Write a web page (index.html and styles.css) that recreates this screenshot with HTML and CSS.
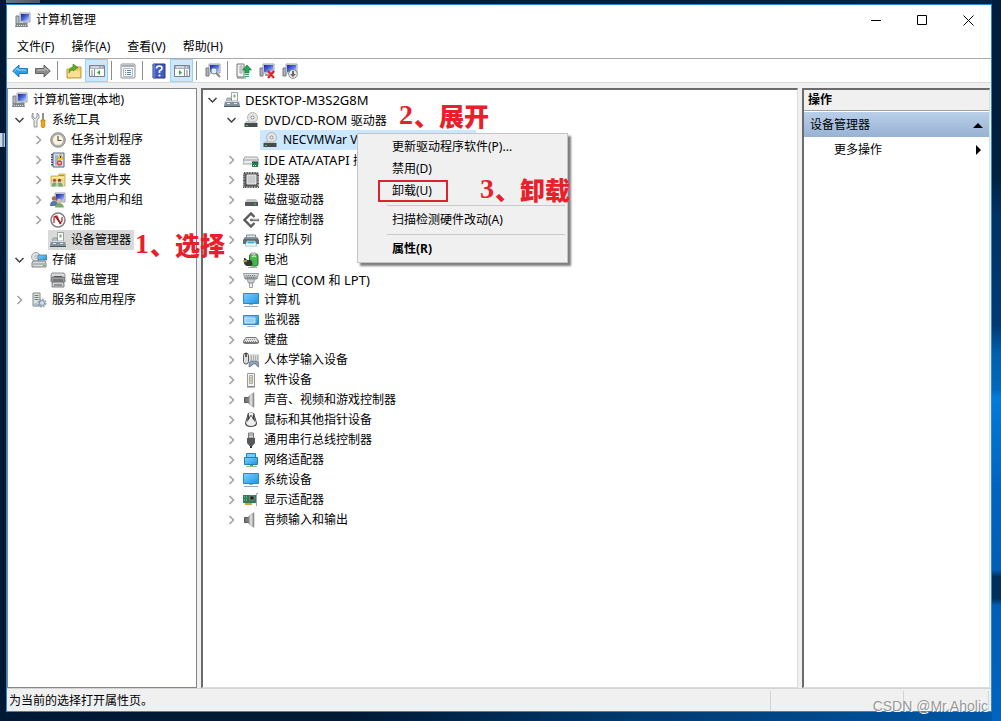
FILE: index.html
```html
<!DOCTYPE html>
<html lang="zh-CN">
<head>
<meta charset="utf-8">
<title>计算机管理</title>
<link rel="stylesheet" href="styles.css">
</head>
<body>
<svg class="defs" aria-hidden="true">
  <defs>
    <linearGradient id="blue" x1="0" y1="0" x2="1" y2="1"><stop offset="0" stop-color="#7fd0ff"/><stop offset="1" stop-color="#1e94e4"/></linearGradient>
    <linearGradient id="navy" x1="0" y1="0" x2="1" y2="1"><stop offset="0" stop-color="#1822a0"/><stop offset=".5" stop-color="#4d68dc"/><stop offset="1" stop-color="#c5dcff"/></linearGradient>
    <linearGradient id="steel" x1="0" y1="0" x2="0" y2="1"><stop offset="0" stop-color="#eceeef"/><stop offset="1" stop-color="#888e92"/></linearGradient>
    <linearGradient id="metal" x1="0" y1="0" x2="1" y2="0"><stop offset="0" stop-color="#666"/><stop offset=".5" stop-color="#eee"/><stop offset="1" stop-color="#777"/></linearGradient>
  </defs>
  <symbol id="i-computer" viewBox="0 0 16 16"><path d="M1 4h3v8H1z" fill="#b9bfc4" stroke="#777f86"/><path d="M5 1h10v9H5z" fill="#dfe2e5" stroke="#9aa2aa"/><path d="M6 2h8v7H6z" fill="url(#navy)"/><path d="M8 10h4l1 2H8z" fill="#aaa"/><path d="M1 11h11l1 4H0z" fill="#7d878c"/><path d="M2 13.500h9" stroke="#e2e6e8" stroke-dasharray="1 1"/></symbol>
  <symbol id="i-tools" viewBox="0 0 16 16"><path d="M2 1v4l2 1.500L6 5V1l2 2v3L6 8v7H3V8L1 6V3z" fill="#e5e8ea" stroke="#7d8388" stroke-width=".8"/><path d="M12 1v7" stroke="#777" stroke-width="1.600"/><path d="M10 8h4v2l-.6 1 .6 3-1 1.500h-2L10 14l.6-3-.6-1z" fill="#f2a516" stroke="#b87305" stroke-width=".7"/></symbol>
  <symbol id="i-clock" viewBox="0 0 16 16"><circle cx="8" cy="8" r="7.300" fill="#b4b4b4" stroke="#777" stroke-width=".8"/><circle cx="8" cy="8" r="5.500" fill="#fbf3dc" stroke="#999" stroke-width=".6"/><path d="M8 4v4.500h3.500" fill="none" stroke="#555" stroke-width="1.200"/></symbol>
  <symbol id="i-event" viewBox="0 0 16 16"><path d="M3 1h11v14H3z" fill="#d7e2ef" stroke="#50658a"/><path d="M2 2v12" stroke="#3f5277" stroke-width="2" stroke-dasharray="1.500 1"/><path d="M5 4h3M5 6h3M5 8h3M5 10h2M5 12h2" stroke="#5474b0" stroke-width=".8"/><path d="M10.500 2l3 5h-6z" fill="#ffd430" stroke="#c49100" stroke-width=".6"/><path d="M10.500 4v2" stroke="#222"/><circle cx="9.500" cy="11" r="2.700" fill="#d9453b"/><path d="M8.500 10l2 2m0-2l-2 2" stroke="#fff" stroke-width=".8"/></symbol>
  <symbol id="i-share" viewBox="0 0 16 16"><path d="M1 4h7l1-2h6v12H1z" fill="#f3d982" stroke="#c6a24a" stroke-width=".8"/><path d="M9 3h5v1H9z" fill="#5aa0da"/><path d="M2 5h12v1H2z" fill="#fff2ba"/><circle cx="4.500" cy="8.500" r="1.700" fill="#a8552f"/><circle cx="9.500" cy="8.500" r="1.700" fill="#7a4928"/><path d="M1 15q0-5 3.500-5T8 15zM6 15q0-5 3.500-5t4 5z" fill="#78ab68" stroke="#fff" stroke-width=".6"/></symbol>
  <symbol id="i-users" viewBox="0 0 16 16"><path d="M5 1h10v9H5z" fill="#dde2e6" stroke="#959da6"/><path d="M6 2h8v7H6z" fill="url(#navy)"/><circle cx="4" cy="6.500" r="2.300" fill="#a87045"/><circle cx="9" cy="9" r="2.300" fill="#e2bd88"/><path d="M0 14q0-5 4-5t4 5z" fill="#5576ac"/><path d="M5 15.500q0-4.500 4-4.500t5 4.500z" fill="#79a86f"/></symbol>
  <symbol id="i-perf" viewBox="0 0 16 16"><circle cx="8" cy="8" r="7" fill="#fff" stroke="#808080" stroke-width="1.500"/><path d="M4 11V5l3-1 3 7 2-2V5" fill="none" stroke="#c9252a" stroke-width="1.300"/><path d="M5 4l6 8" stroke="#8d181b" stroke-width="1.300"/></symbol>
  <symbol id="i-device" viewBox="0 0 16 16"><path d="M7.500 .5h6V9h-6z" fill="#fff" stroke="#858d92" stroke-width=".8"/><path d="M9.500 2.500h2v3h-2z" fill="#79b567"/><path d="M3 6h4l1 4H2z" fill="#b8bec2" stroke="#7d8589" stroke-width=".6"/><path d="M1 9h14l1 5H0z" fill="#83929d"/><path d="M1 9.500h14" stroke="#d5dde2"/><path d="M3 11.500h3m4 0h3" stroke="#dfe9f0"/><path d="M0 14.500h16" stroke="#4e5961"/></symbol>
  <symbol id="i-storage" viewBox="0 0 16 16"><circle cx="5" cy="5" r="4.500" fill="#dce5df" stroke="#8b9692" stroke-width=".8"/><circle cx="5" cy="5" r="1.300" fill="#fff" stroke="#888" stroke-width=".6"/><path d="M7 3h9v5H7z" fill="url(#blue)" stroke="#68747c" stroke-width=".8"/><path d="M2 9h12l1 2v4H1v-4z" fill="#d7dbdd" stroke="#62696d" stroke-width=".8"/><path d="M2 12h12" stroke="#8a9392"/><path d="M12 13.500h2" stroke="#39c84a"/></symbol>
  <symbol id="i-disks" viewBox="0 0 16 16"><path d="M2 1h12l1 2v3H1V3z" fill="#d9dcde" stroke="#777" stroke-width=".8"/><path d="M2 5h12l1 2v3H1V7z" fill="#9a9fa2" stroke="#666" stroke-width=".8"/><path d="M3 10h10l1 2v3H2v-3z" fill="#cdd0d2" stroke="#666" stroke-width=".8"/><path d="M4 4.500h8M3 8h10M4 13h8" stroke="#555"/></symbol>
  <symbol id="i-services" viewBox="0 0 16 16"><path d="M2 1h7v13H2z" fill="#dce0e2" stroke="#81888c"/><path d="M3.500 3.500h4m-4 2h4m-4 2h4" stroke="#5f8a70"/><circle cx="11" cy="11" r="3.500" fill="none" stroke="#8ba5bd" stroke-width="2" stroke-dasharray="1.800 .9"/><circle cx="11" cy="11" r="2.500" fill="#d4e0ea" stroke="#7a94aa"/><circle cx="5" cy="13" r="2" fill="#acb8c0"/></symbol>
  <symbol id="i-optical" viewBox="0 0 16 16"><circle cx="9.500" cy="5.500" r="5" fill="#e2e4e5" stroke="#a4a7a9" stroke-width=".8"/><circle cx="9.500" cy="5.500" r="1.500" fill="#fff" stroke="#888"/><path d="M3 9h10l1.500 2.500h-13z" fill="#c5c8ca"/><path d="M1.500 11h13v4h-13z" fill="#484c4f"/><path d="M3 13.500h2" stroke="#3bcf4c"/></symbol>
  <symbol id="i-ide" viewBox="0 0 16 16"><path d="M2 5h12l2 3v4H0V8z" fill="#e9ebec" stroke="#858b8e" stroke-width=".8"/><path d="M0 8h15" stroke="#999"/><path d="M9 10h6v5H9z" fill="#26804c"/><path d="M10 9v2m2-2v2m2-2v2" stroke="#174d30"/><path d="M10 13.500h4" stroke="#bfe7c9" stroke-dasharray="1 1"/></symbol>
  <symbol id="i-cpu" viewBox="0 0 16 16"><path d="M1 1h14v14H1z" fill="none" stroke="#4e4e4e" stroke-width="2" stroke-dasharray="1 .6"/><path d="M1.500 1.500h13v13h-13z" fill="#555"/><path d="M4 3h9v9H4z" fill="#c9cbcc" stroke="#eee"/></symbol>
  <symbol id="i-disk" viewBox="0 0 16 16"><path d="M4 7h9l2 3H2z" fill="#c3c6c8"/><path d="M2 10h13v4H2z" fill="#54585a"/><path d="M11 12h2" stroke="#40cf50"/></symbol>
  <symbol id="i-controller" viewBox="0 0 16 16"><path d="M11.500 5L8 1.500 1.500 8 8 14.500l3.500-3.500" fill="none" stroke="#5a5a5a" stroke-width="2.400"/><path d="M7 8h9" stroke="#777" stroke-width="2.400"/><path d="M10 7.500h5" stroke="#bbb" stroke-width=".8"/></symbol>
  <symbol id="i-printer" viewBox="0 0 16 16"><path d="M3.500 3h9v4h-9z" fill="#dfe9ef" stroke="#7c8a90"/><path d="M2 5h12l2 3v4H0V8z" fill="#5f6c74"/><path d="M2 6h12" stroke="#a9b6be"/><path d="M4 9h8l2 5H2z" fill="#fff" stroke="#7ab3cc" stroke-width=".7"/><path d="M4.500 10.500h7" stroke="#35b0d4" stroke-width="2"/></symbol>
  <symbol id="i-battery" viewBox="0 0 16 16"><rect x="6.500" y="2" width="8.500" height="12" rx="2" fill="#47b749" stroke="#28732d"/><path d="M8 1h5v2H8z" fill="#d4ddd5" stroke="#777" stroke-width=".6"/><path d="M9 5q2-2 4 0" fill="none" stroke="#b2ef9c" stroke-width="1.500"/><path d="M1 6q2 0 3 2h4q3 4 0 6H4q-3-1-3-4z" fill="#30372e"/><path d="M0 9h4" stroke="#c9b95a" stroke-width="1.500"/><path d="M5 15.500h9" stroke="#aaa"/></symbol>
  <symbol id="i-port" viewBox="0 0 16 16"><path d="M.5 1.500h15L14 7H2z" fill="url(#steel)" stroke="#848b8f" stroke-width=".8"/><path d="M3 3.500h10M4 5.500h8" stroke="#777d80" stroke-dasharray="1 1"/><path d="M4 7h8l-1.500 4h-5z" fill="#c8cdcf" stroke="#858c8f" stroke-width=".8"/><path d="M6.500 11h3v4.500h-3z" fill="#eee" stroke="#888" stroke-width=".8"/></symbol>
  <symbol id="i-pc" viewBox="0 0 16 16"><path d="M.5 1.500h15v10H.5z" fill="url(#blue)" stroke="#248bc3"/><path d="M6 12h4v1H6z" fill="#8db4c9"/><path d="M1 14.500h14" stroke="#8eabb9"/></symbol>
  <symbol id="i-monitor" viewBox="0 0 16 16"><path d="M.5 3.500h15v9H.5z" fill="url(#blue)" stroke="#348bb6"/><path d="M2 6h10v5H2z" fill="#8fd3fb" stroke="#d4efff" stroke-width=".8"/><path d="M4 14.500h8" stroke="#a3bbc8"/></symbol>
  <symbol id="i-keyboard" viewBox="0 0 16 16"><path d="M3 5h10l3 4v2l-2 1H2l-2-1V9z" fill="#777"/><path d="M3 6h10l2 4H1z" fill="#e4e4e4"/><path d="M3 7.500h10M2 9.500h12" stroke="#888" stroke-dasharray="1 1"/></symbol>
  <symbol id="i-hid" viewBox="0 0 16 16"><path d="M7 3h9v7H7z" fill="#e0e2e4" stroke="#aaa" stroke-width=".7"/><path d="M8 5h7m-7 2h7" stroke="#777" stroke-dasharray="1 1"/><rect x=".5" y="1" width="5" height="11" rx="2.500" fill="#ddd" stroke="#555"/><path d="M3 1v4" stroke="#333" stroke-width="1.500"/><path d="M6 15q0-7 3-6h3q4-1 4 6l-2-1-1-2h-3l-2 2z" fill="#8ba4bb" stroke="#536476" stroke-width=".7"/></symbol>
  <symbol id="i-software" viewBox="0 0 16 16"><path d="M4.500 1.500h7v13h-7z" fill="#f1f2ef" stroke="#999"/><path d="M6.500 3.500h3v8h-3z" fill="#ddd" stroke="#aaa"/><path d="M8 5v5" stroke="#c7bc37"/><path d="M4 15h8" stroke="#777"/></symbol>
  <symbol id="i-speaker" viewBox="0 0 16 16"><path d="M1.500 5.500h4v5h-4z" fill="#777" stroke="#555"/><path d="M5 5l6-4.500v15L5 11z" fill="url(#metal)" stroke="#999" stroke-width=".6"/></symbol>
  <symbol id="i-mouse" viewBox="0 0 16 16"><path d="M5 1q3-1 6 0l3 10q0 4-6 4t-6-4z" fill="#444"/><path d="M6 1h4l3 10q-1 3-5 3t-5-3z" fill="#eee"/><path d="M5 1l2 5-3 4zM11 1L9 6l3 4z" fill="#444"/><circle cx="8" cy="4" r="1" fill="#555"/></symbol>
  <symbol id="i-usb" viewBox="0 0 16 16"><path d="M5.500 1h5v5h-5z" fill="#ddd" stroke="#777"/><path d="M6.500 3h1m1 0h1" stroke="#333"/><path d="M4 6h8v5l-2.500 3h-3L4 11z" fill="#55595b"/><path d="M7 14h2v2H7z" fill="#333"/></symbol>
  <symbol id="i-network" viewBox="0 0 16 16"><path d="M3.500 1.500h9v7h-9z" fill="#71ceff" stroke="#2583b7"/><path d="M1.500 5.500h13v7h-13z" fill="url(#blue)" stroke="#237fac"/><path d="M7 13h3v2H7z" fill="#58a54d"/><path d="M3 14.500h11" stroke="#8cc47e"/></symbol>
  <symbol id="i-display" viewBox="0 0 16 16"><path d="M0 3h13v8H0z" fill="#347958"/><path d="M7 4h4v4H7z" fill="#222" stroke="#aaa" stroke-width=".6"/><path d="M1 5h4M1 8h4" stroke="#9ad0af" stroke-dasharray="1 1"/><path d="M2 12h7" stroke="#d0a43a" stroke-width="2"/><path d="M15 1.500h-1.500V14" fill="none" stroke="#a4a6a7"/></symbol>
  <symbol id="i-back" viewBox="0 0 16 16"><path d="M.7 8L7 2v3.500h8.500v5H7V14z" fill="#2ba1e5" stroke="#1870a9" stroke-width=".9"/><path d="M2.500 8L6 5v2h8" fill="none" stroke="#95dbff"/></symbol>
  <symbol id="i-forward" viewBox="0 0 16 16"><path d="M15.300 8L9 2v3.500H.5v5H9V14z" fill="#8c8c8c" stroke="#5a5a5a" stroke-width=".9"/><path d="M13 8L10 5v2H2" fill="none" stroke="#c5c5c5"/></symbol>
  <symbol id="i-folder" viewBox="0 0 16 16"><path d="M1 6h5l1-2h8v11H1z" fill="#efcb6c" stroke="#c39a3c"/><path d="M2 8h12v6H2z" fill="#f8df94"/><path d="M3 10q0-6 4-6V1l5 3.500L7 8V6.500Q4 7 3 10z" fill="#5cb324" stroke="#367f13" stroke-width=".6"/></symbol>
  <symbol id="i-tree" viewBox="0 0 16 16"><path d="M.5 2.500h15v11H.5z" fill="#fff" stroke="#7b8188"/><path d="M1 3h14v3H1z" fill="#a7b0ba"/><path d="M2 4h8m2 0h1" stroke="#fff"/><path d="M5.500 6v7" stroke="#8a9199"/><path d="M2 8h2m-2 2h2m-2 2h2" stroke="#758191"/><path d="M11 7v5L8 9.500z" fill="#36a72a"/></symbol>
  <symbol id="i-panel" viewBox="0 0 16 16"><path d="M.5 2.500h15v11H.5z" fill="#fff" stroke="#7b8188"/><path d="M1 3h14v3H1z" fill="#a7b0ba"/><path d="M2 4h8m2 0h1" stroke="#fff"/><path d="M10.500 6v7" stroke="#8a9199"/><path d="M12 8h2m-2 2h2m-2 2h2" stroke="#758191"/><path d="M5 7v5l3-2.500z" fill="#36a72a"/></symbol>
  <symbol id="i-props" viewBox="0 0 16 16"><rect x="1" y="1" width="14" height="14" rx="1" fill="#f9f9f9" stroke="#8b9096"/><path d="M2 3h12" stroke="#a7aeb6" stroke-width="2"/><path d="M3.500 5.500h9v8h-9z" fill="#fff" stroke="#b4babf"/><path d="M5 7.500h1m1 0h4m-6 2h1m1 0h4m-6 2h1m1 0h4" stroke="#5488bd"/></symbol>
  <symbol id="i-help" viewBox="0 0 16 16"><path d="M2 1h12v14H2z" fill="#3f5cc4" stroke="#263776"/><path d="M3 1v14" stroke="#839be2"/><path d="M5.500 5.500q0-2.500 2.800-2.500 2.700 0 2.700 2.300 0 1.400-2.500 2.700V10" fill="none" stroke="#fff" stroke-width="1.700"/><circle cx="8.500" cy="12.500" r="1.100" fill="#fff"/></symbol>
  <symbol id="i-scan" viewBox="0 0 16 16"><path d="M1 5h3v8H1z" fill="#aeb4bb" stroke="#777"/><path d="M4 1h11v9H4z" fill="#dfe2e5" stroke="#9aa2aa"/><path d="M5 2h9v7H5z" fill="url(#navy)"/><circle cx="9" cy="8" r="3" fill="#d8efff" stroke="#818b92"/><path d="M11 10l4 4" stroke="#888" stroke-width="2"/></symbol>
  <symbol id="i-update" viewBox="0 0 16 16"><path d="M1 1h7v13H1z" fill="#f3f3f3" stroke="#777"/><path d="M4 3h2v7H4z" fill="#ddd" stroke="#aaa"/><path d="M1 15h9" stroke="#777"/><path d="M11 2l4.500 5H13v3H9V7H6.500z" fill="#26a557" stroke="#147438" stroke-width=".6"/><path d="M9 11.500h4m-4 2h4" stroke="#26a557"/></symbol>
  <symbol id="i-uninstall" viewBox="0 0 16 16"><path d="M1 5h3v8H1z" fill="#aeb4bb" stroke="#777"/><path d="M4 1h11v9H4z" fill="#dfe2e5" stroke="#9aa2aa"/><path d="M5 2h9v7H5z" fill="url(#navy)"/><path d="M6 11h4v2H6z" fill="#999"/><path d="M9 8l6 7m0-7l-6 7" stroke="#e01f24" stroke-width="2"/></symbol>
  <symbol id="i-disable" viewBox="0 0 16 16"><path d="M1 5h3v8H1z" fill="#aeb4bb" stroke="#777"/><path d="M4 1h11v9H4z" fill="#dfe2e5" stroke="#9aa2aa"/><path d="M5 2h9v7H5z" fill="url(#navy)"/><circle cx="11" cy="11" r="4.300" fill="#eee" stroke="#888"/><path d="M10 8h2v3h2l-3 3-3-3h2z" fill="#666"/></symbol>
  <symbol id="c-open" viewBox="0 0 19 20"><path d="M5.500 8l4 4 4-4" fill="none" stroke="#404040" stroke-width="1.500"/></symbol>
  <symbol id="c-shut" viewBox="0 0 19 20"><path d="M7.500 6l4 4-4 4" fill="none" stroke="#a0a0a0" stroke-width="1.500"/></symbol>
</svg>

<main class="window">
  <header class="title-bar">
    <svg class="icon"><use href="#i-computer"/></svg>
    <h1 class="title">计算机管理</h1>
    <div class="caption-buttons">
      <button class="caption" aria-label="最小化"><svg class="glyph" viewBox="0 0 11 11"><path d="M0 5.500h10"/></svg></button>
      <button class="caption" aria-label="最大化"><svg class="glyph" viewBox="0 0 11 11"><path d="M.5 .5h9v9h-9z"/></svg></button>
      <button class="caption" aria-label="关闭"><svg class="glyph" viewBox="0 0 11 11"><path d="M.5 .5l10 10m0-10l-10 10"/></svg></button>
    </div>
  </header>
  <nav class="menu-bar">
    <button class="menu">文件(F)</button><button class="menu">操作(A)</button><button class="menu">查看(V)</button><button class="menu">帮助(H)</button>
  </nav>
  <div class="toolbar" role="toolbar">
    <button class="tool" aria-label="后退"><svg class="icon"><use href="#i-back"/></svg></button>
    <button class="tool" aria-label="前进"><svg class="icon"><use href="#i-forward"/></svg></button>
    <span class="divider"></span>
    <button class="tool" aria-label="上一级"><svg class="icon"><use href="#i-folder"/></svg></button>
    <button class="tool pressed" aria-label="显示控制台树" aria-pressed="true"><svg class="icon"><use href="#i-tree"/></svg></button>
    <span class="divider"></span>
    <button class="tool" aria-label="属性"><svg class="icon"><use href="#i-props"/></svg></button>
    <span class="divider"></span>
    <button class="tool" aria-label="帮助"><svg class="icon"><use href="#i-help"/></svg></button>
    <button class="tool pressed" aria-label="显示操作窗格" aria-pressed="true"><svg class="icon"><use href="#i-panel"/></svg></button>
    <span class="divider"></span>
    <button class="tool" aria-label="扫描"><svg class="icon"><use href="#i-scan"/></svg></button>
    <span class="divider"></span>
    <button class="tool" aria-label="更新驱动程序"><svg class="icon"><use href="#i-update"/></svg></button>
    <button class="tool" aria-label="卸载"><svg class="icon"><use href="#i-uninstall"/></svg></button>
    <button class="tool" aria-label="禁用"><svg class="icon"><use href="#i-disable"/></svg></button>
  </div>

  <div class="workspace">
    <section class="pane console">
      <div class="node"><svg class="icon"><use href="#i-computer"/></svg>计算机管理(本地)</div>
      <ul class="tree">
        <li><div class="row"><svg class="chevron"><use href="#c-open"/></svg><span class="node"><svg class="icon"><use href="#i-tools"/></svg>系统工具</span></div>
          <ul class="tree nested">
            <li class="row"><svg class="chevron"><use href="#c-shut"/></svg><span class="node"><svg class="icon"><use href="#i-clock"/></svg>任务计划程序</span></li>
            <li class="row"><svg class="chevron"><use href="#c-shut"/></svg><span class="node"><svg class="icon"><use href="#i-event"/></svg>事件查看器</span></li>
            <li class="row"><svg class="chevron"><use href="#c-shut"/></svg><span class="node"><svg class="icon"><use href="#i-share"/></svg>共享文件夹</span></li>
            <li class="row"><svg class="chevron"><use href="#c-shut"/></svg><span class="node"><svg class="icon"><use href="#i-users"/></svg>本地用户和组</span></li>
            <li class="row"><svg class="chevron"><use href="#c-shut"/></svg><span class="node"><svg class="icon"><use href="#i-perf"/></svg>性能</span></li>
            <li class="row"><span class="chevron"></span><span class="node current"><svg class="icon"><use href="#i-device"/></svg>设备管理器</span></li>
          </ul>
        </li>
        <li><div class="row"><svg class="chevron"><use href="#c-open"/></svg><span class="node"><svg class="icon"><use href="#i-storage"/></svg>存储</span></div>
          <ul class="tree nested">
            <li class="row"><span class="chevron"></span><span class="node"><svg class="icon"><use href="#i-disks"/></svg>磁盘管理</span></li>
          </ul>
        </li>
        <li class="row"><svg class="chevron"><use href="#c-shut"/></svg><span class="node"><svg class="icon"><use href="#i-services"/></svg>服务和应用程序</span></li>
      </ul>
    </section>

    <section class="pane sunken">
      <div class="row"><svg class="chevron"><use href="#c-open"/></svg><span class="node latin"><svg class="icon"><use href="#i-device"/></svg>DESKTOP-M3S2G8M</span></div>
      <ul class="tree nested">
        <li><div class="row"><svg class="chevron"><use href="#c-open"/></svg><span class="node"><svg class="icon"><use href="#i-optical"/></svg><span><span class="latin">DVD/CD-ROM </span>驱动器</span></span></div>
          <ul class="tree nested">
            <li class="row"><span class="chevron"></span><span class="node selected"><svg class="icon"><use href="#i-optical"/></svg>NECVMWar V</span></li>
          </ul>
        </li>
        <li class="row"><svg class="chevron"><use href="#c-shut"/></svg><span class="node"><svg class="icon"><use href="#i-ide"/></svg><span><span class="latin">IDE ATA/ATAPI </span>控</span></span></li>
        <li class="row"><svg class="chevron"><use href="#c-shut"/></svg><span class="node"><svg class="icon"><use href="#i-cpu"/></svg>处理器</span></li>
        <li class="row"><svg class="chevron"><use href="#c-shut"/></svg><span class="node"><svg class="icon"><use href="#i-disk"/></svg>磁盘驱动器</span></li>
        <li class="row"><svg class="chevron"><use href="#c-shut"/></svg><span class="node"><svg class="icon"><use href="#i-controller"/></svg>存储控制器</span></li>
        <li class="row"><svg class="chevron"><use href="#c-shut"/></svg><span class="node"><svg class="icon"><use href="#i-printer"/></svg>打印队列</span></li>
        <li class="row"><svg class="chevron"><use href="#c-shut"/></svg><span class="node"><svg class="icon"><use href="#i-battery"/></svg>电池</span></li>
        <li class="row"><svg class="chevron"><use href="#c-shut"/></svg><span class="node"><svg class="icon"><use href="#i-port"/></svg><span>端口<span class="latin"> (COM </span>和<span class="latin"> LPT)</span></span></span></li>
        <li class="row"><svg class="chevron"><use href="#c-shut"/></svg><span class="node"><svg class="icon"><use href="#i-pc"/></svg>计算机</span></li>
        <li class="row"><svg class="chevron"><use href="#c-shut"/></svg><span class="node"><svg class="icon"><use href="#i-monitor"/></svg>监视器</span></li>
        <li class="row"><svg class="chevron"><use href="#c-shut"/></svg><span class="node"><svg class="icon"><use href="#i-keyboard"/></svg>键盘</span></li>
        <li class="row"><svg class="chevron"><use href="#c-shut"/></svg><span class="node"><svg class="icon"><use href="#i-hid"/></svg>人体学输入设备</span></li>
        <li class="row"><svg class="chevron"><use href="#c-shut"/></svg><span class="node"><svg class="icon"><use href="#i-software"/></svg>软件设备</span></li>
        <li class="row"><svg class="chevron"><use href="#c-shut"/></svg><span class="node"><svg class="icon"><use href="#i-speaker"/></svg>声音、视频和游戏控制器</span></li>
        <li class="row"><svg class="chevron"><use href="#c-shut"/></svg><span class="node"><svg class="icon"><use href="#i-mouse"/></svg>鼠标和其他指针设备</span></li>
        <li class="row"><svg class="chevron"><use href="#c-shut"/></svg><span class="node"><svg class="icon"><use href="#i-usb"/></svg>通用串行总线控制器</span></li>
        <li class="row"><svg class="chevron"><use href="#c-shut"/></svg><span class="node"><svg class="icon"><use href="#i-network"/></svg>网络适配器</span></li>
        <li class="row"><svg class="chevron"><use href="#c-shut"/></svg><span class="node"><svg class="icon"><use href="#i-pc"/></svg>系统设备</span></li>
        <li class="row"><svg class="chevron"><use href="#c-shut"/></svg><span class="node"><svg class="icon"><use href="#i-display"/></svg>显示适配器</span></li>
        <li class="row"><svg class="chevron"><use href="#c-shut"/></svg><span class="node"><svg class="icon"><use href="#i-speaker"/></svg>音频输入和输出</span></li>
      </ul>
    </section>

    <aside class="pane sunken">
      <h2 class="actions-title">操作</h2>
      <button class="actions-group">设备管理器<svg class="arrow" viewBox="0 0 10 10"><path d="M0 8l5-5 5 5z"/></svg></button>
      <button class="actions-item">更多操作<svg class="arrow" viewBox="0 0 10 10"><path d="M3 0l5 5-5 5z"/></svg></button>
    </aside>

    <div class="context-menu" role="menu">
      <button class="command" role="menuitem">更新驱动程序软件(P)...</button>
      <button class="command" role="menuitem">禁用(D)</button>
      <button class="command marked" role="menuitem">卸载(U)</button>
      <hr class="rule">
      <button class="command" role="menuitem">扫描检测硬件改动(A)</button>
      <hr class="rule">
      <button class="command default" role="menuitem">属性(R)</button>
    </div>
    <p class="note step-one"><span class="digit">1</span>、选择</p>
    <p class="note step-two"><span class="digit">2</span>、展开</p>
    <p class="note step-three"><span class="digit">3</span>、卸载</p>
  </div>

  <footer class="status-bar"><span class="status-text">为当前的选择打开属性页。</span><span class="status-cell"></span><span class="status-cell last"></span></footer>
</main>
<p class="watermark">CSDN @Mr.Aholic</p>
</body>
</html>
```
FILE: styles.css
```css
* { box-sizing: border-box; }

body {
  margin: 0;
  height: 100vh;
  display: flex;
  padding: 4px 9px 9px 6px;
  position: relative;
  overflow: hidden;
  font: 12px/20px "Noto Sans", "Noto Sans CJK SC", sans-serif;
  color: #000;
  background:
    linear-gradient(90deg, #cfd8e2 0, #cfd8e2 2px, #2f5f94 3px, #e3e8ee 5px) 0 133px / 5px 14px no-repeat,
    linear-gradient(90deg, #6d7480, #4a5566) 6px 0 / 34px 3px no-repeat,
    linear-gradient(#001d3d 0, #00203f 24%, #003366 30%, #003a75 45%, #005fae 49%, #0068bd 54%, #007bdd 55%, #0063c0 68%, #0060b8 79%, #002f5c 80%, #002f5c 83%, #005fb8 84%, #0064be 100%) right top / 9px 100% no-repeat,
    linear-gradient(90deg, #001a35 0, #001a35 35%, #003b72 65%, #0058a8 100%) left bottom / 100% 10px no-repeat,
    linear-gradient(90deg, #001a35, #00254d);
}

button {
  font: inherit;
  color: inherit;
  border: 0;
  padding: 0;
  margin: 0;
  background: none;
  text-align: left;
}

.defs { position: absolute; width: 0; height: 0; }
.icon { width: 16px; height: 16px; flex: none; display: block; }

.window {
  flex: 1;
  display: flex;
  flex-direction: column;
  min-width: 0;
  border: 1px solid #2a8acb;
  background: #f0f0f0;
}

.title-bar {
  display: flex;
  align-items: center;
  gap: 5px;
  height: 30px;
  padding-left: 8px;
  background: #fff;
}
.title { flex: 1; margin: 0; font-size: 12px; font-weight: 400; }
.caption-buttons { display: flex; }
.caption { width: 46px; height: 28px; display: grid; place-items: center; }
.glyph { width: 11px; height: 11px; fill: none; stroke: #000; }

.menu-bar { display: flex; gap: 1px; height: 24px; padding-left: 2px; background: #fff; border-bottom: 1px solid #ababab; }
.menu { padding: 0 8px; }

.toolbar { display: flex; height: 24px; padding-left: 1px; background: #fff; border-bottom: 1px solid #dadada; }
.tool { width: 23px; display: grid; place-items: center; }
.pressed { background: #cce8ff; border: 1px solid #99d1ff; }
.divider { width: 5px; margin: 2px 0 2px 3px; border-left: 1px solid #8d8d8d; }

.workspace {
  flex: 1;
  min-height: 0;
  position: relative;
  display: grid;
  grid-template-columns: 190px 1fr 188px;
  gap: 4px;
  margin: 5px 1px 0 0;
}
.pane { min-width: 0; background: #fff; }
.console { border: 1px solid #828790; padding: 1px 0 0 2px; }
.sunken { border: 2px solid #6b6b6b; border-right: 1px solid #dcdcdc; border-bottom: 1px solid #dcdcdc; }

.tree { list-style: none; margin: 0; padding: 0; }
.nested { padding-left: 19px; }
.row { display: flex; height: 20px; }
.chevron { width: 19px; height: 20px; flex: none; }
.node { display: flex; align-items: center; gap: 5px; height: 20px; padding: 0 3px 0 2px; white-space: nowrap; }
.latin { font-size: 13px; white-space: pre; }
.current { background: #d9d9d9; }
.selected { min-width: 216px; background: #cce8ff; }

.actions-title { margin: 0; padding-left: 4px; font-size: 12px; line-height: 20px; background: #f0f0f0; border-bottom: 1px solid #a0a0a0; }
.actions-group, .actions-item { display: flex; align-items: center; justify-content: space-between; width: 100%; height: 25px; padding: 0 6px; }
.actions-group { margin-top: 1px; background: linear-gradient(#b9cfe9, #98b2d4); }
.actions-item { padding-left: 30px; }
.arrow { width: 10px; height: 10px; }

.context-menu {
  position: absolute;
  left: 350px;
  top: 45px;
  width: 211px;
  padding: 2px;
  background: #f0f0f0;
  border: 1px solid #c4c4c4;
  box-shadow: 3px 3px 2px rgba(0, 0, 0, .5);
}
.command { display: block; width: 100%; height: 22px; padding-left: 32px; }
.marked { width: 70px; margin-left: 18px; padding-left: 12px; line-height: 18px; border: 2px solid #dc2430; }
.rule { height: 1px; margin: 3px 0 3px 27px; border: 0; background: #c9c9c9; }
.default { font-weight: 700; }

.note {
  position: absolute;
  display: flex;
  margin: 0;
  font: 900 25px/30px "Noto Sans CJK SC", sans-serif;
  color: #e8202a;
  white-space: nowrap;
}
.digit { width: 15px; font-family: "Liberation Serif", serif; font-size: 28px; font-weight: 700; }
.step-one { left: 128px; top: 141px; }
.step-two { left: 392px; top: 12px; }
.step-three { left: 473px; top: 86px; }

.status-bar { display: flex; height: 23px; padding: 2px 2px 0 0; border-top: 1px solid #d4d4d4; }
.status-text { flex: 1; padding-left: 2px; }
.status-cell { width: 133px; border-left: 1px solid #d4d4d4; }
.last { width: 86px; border-right: 1px solid #d4d4d4; }

.watermark {
  position: absolute;
  right: 13px;
  bottom: 5px;
  margin: 0;
  font: 14px/20px "Liberation Sans", sans-serif;
  color: #999;
  text-shadow: 1px 1px 0 #fff;
}
```
